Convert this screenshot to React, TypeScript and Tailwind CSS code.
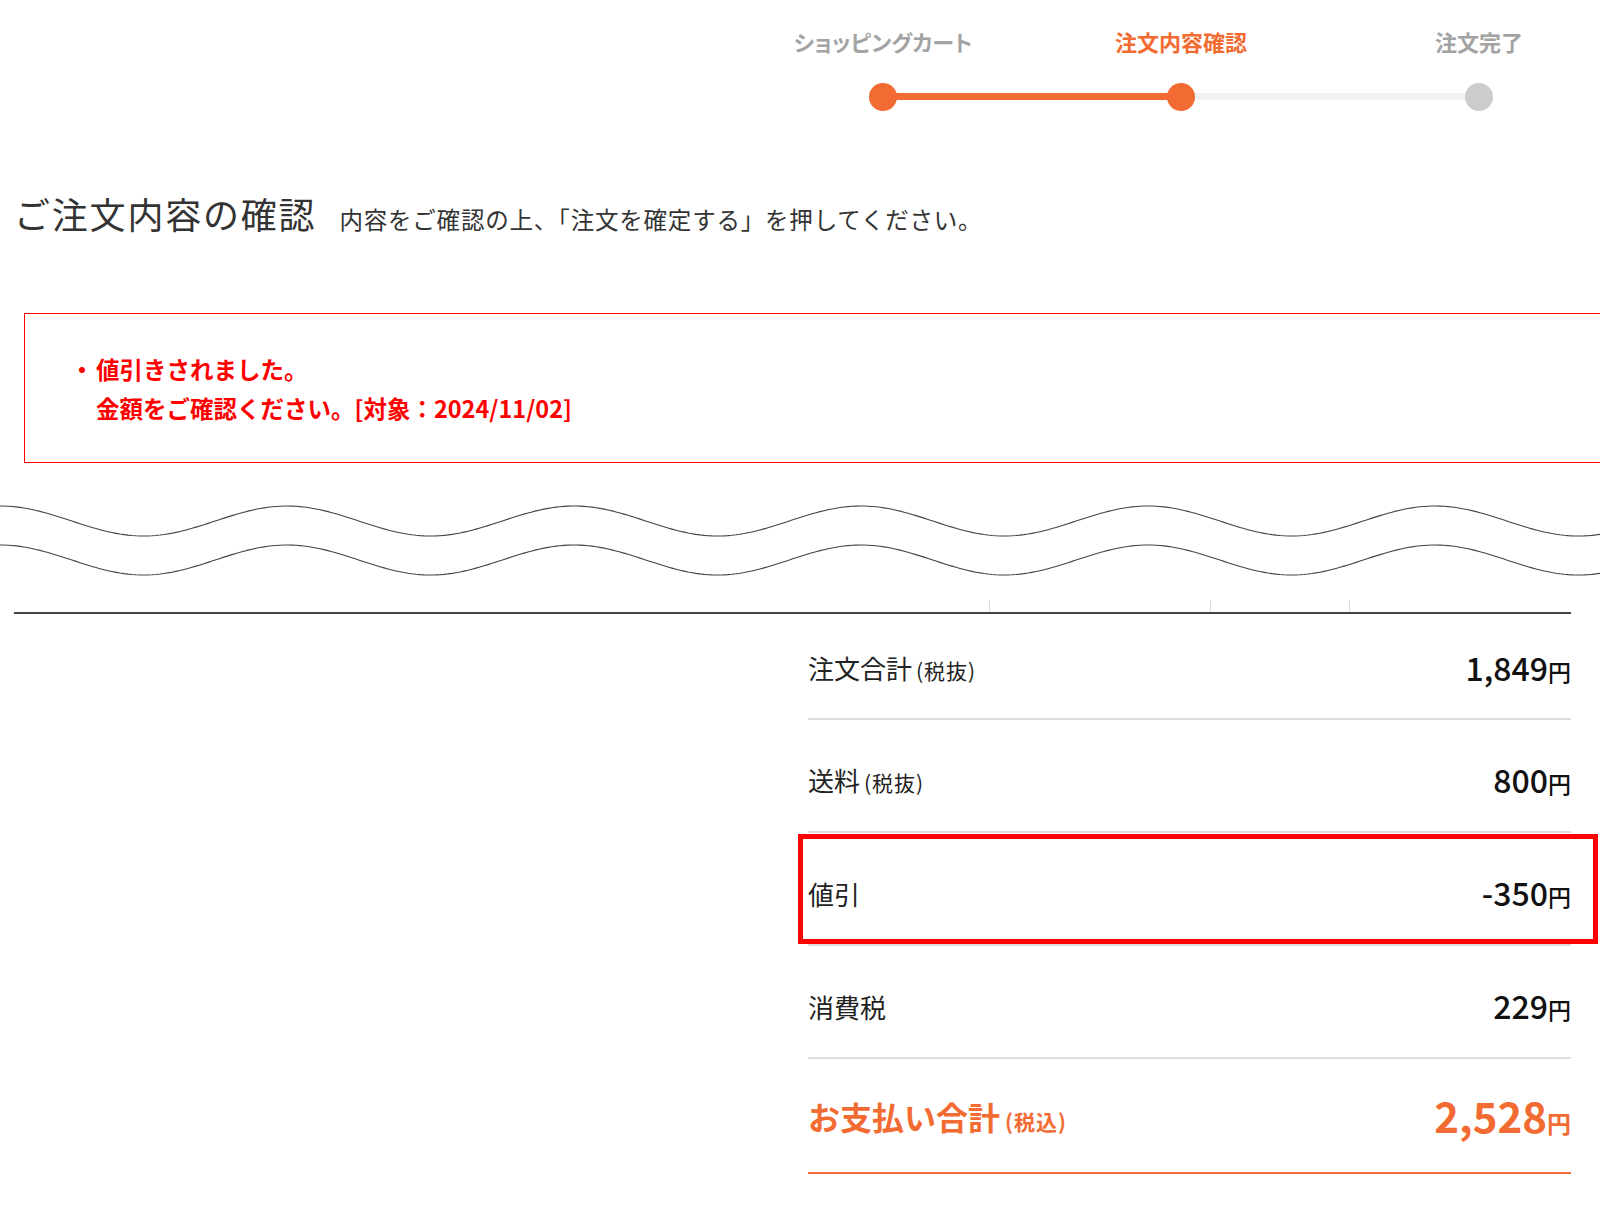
import React from "react";

const FONT = { fontFamily: '"Noto Sans CJK JP", "Noto Sans", sans-serif' };

const STEPS = [
  { label: "ショッピングカート", done: true },
  { label: "注文内容確認", done: true, current: true },
  { label: "注文完了", done: false },
];

// sine-ish wave line, period 287px
function wavePath(cy: number) {
  const pts: string[] = [];
  for (let x = 0; x <= 1600; x += 4) {
    const y = cy - 15 * Math.cos((2 * Math.PI * x) / 287);
    pts.push(`${x},${y.toFixed(2)}`);
  }
  return "M" + pts.join(" L");
}

function Stepper() {
  return (
    <div className="pt-[27px] ml-[734px] w-[894px]">
      <div className="grid grid-cols-3">
        {STEPS.map((s, i) => (
          <div
            key={s.label}
            className={`text-center text-[22px] leading-[28px] font-bold ${i === 0 ? "[font-feature-settings:'palt']" : ""} ${s.current ? "text-[#f26b32]" : "text-[#a3a3a3]"}`}
          >
            {s.label}
          </div>
        ))}
      </div>
      <div className="relative mt-[28px] h-[28px] grid grid-cols-3">
        <div className="absolute left-[149px] top-[10px] h-[7px] w-[596px] bg-[#f2f2f2]" />
        <div className="absolute left-[149px] top-[10px] h-[7px] w-[298px] bg-[#f26b32]" />
        {STEPS.map((s) => (
          <div key={s.label} className="flex justify-center">
            <div className={`relative w-[28px] h-[28px] rounded-full ${s.done ? "bg-[#f26b32]" : "bg-[#cccccc]"}`} />
          </div>
        ))}
      </div>
    </div>
  );
}

type Row = { label: string; note?: string; value: string };

const ROWS: Row[] = [
  { label: "注文合計", note: "(税抜)", value: "1,849" },
  { label: "送料", note: "(税抜)", value: "800" },
  { label: "値引", value: "-350" },
  { label: "消費税", value: "229" },
];

const ROW_CLASSES = [
  "h-[106px] pt-[6px]",
  "h-[113px] pt-[11px]",
  "h-[113px] pt-[11px]",
  "h-[113px] pt-[10px]",
];

export default function App() {
  return (
    <div className="relative w-[1600px] h-[1214px] overflow-hidden bg-white text-[#222]" style={FONT}>
      <Stepper />

      <div className="mt-[78px] pl-[14px] flex items-baseline gap-[23px]">
        <h1 className="text-[36px] leading-[48px] text-[#333] font-normal tracking-[1.8px]">ご注文内容の確認</h1>
        <p className="text-[23.5px] leading-[32px] text-[#333] tracking-[0.8px]">内容をご確認の上、「注文を確定する」を押してください。</p>
      </div>

      <div className="mt-[76px] ml-[24px] border-l border-y border-[#f00] pt-[36px] pb-[34px] pl-[43px]">
        <div className="flex text-[23.5px] leading-[39px] font-bold text-[#f00]">
          <span className="w-[28px] text-center">・</span>
          <div>
            <div>値引きされました。</div>
            <div>金額をご確認ください。[対象：2024/11/02]</div>
          </div>
        </div>
      </div>

      <svg className="block mt-[27px]" width="1600" height="100" viewBox="0 0 1600 100">
        <path d={wavePath(31)} fill="none" stroke="#444" strokeWidth="1.1" />
        <path d={wavePath(70)} fill="none" stroke="#444" strokeWidth="1.1" />
      </svg>

      <div className="ml-[14px] w-[1557px] h-[14px] mt-[10px] flex border-b-2 border-[#444]">
        <div className="w-[976px] border-r border-[#dddddd]" />
        <div className="w-[221px] border-r border-[#dddddd]" />
        <div className="w-[139px] border-r border-[#dddddd]" />
        <div className="flex-1" />
      </div>

      <div className="ml-[808px] w-[763px]">
        {ROWS.map((r, i) => (
          <div
            key={r.label}
            className={`relative flex items-center justify-between border-b-2 border-[#dddddd] ${ROW_CLASSES[i]}`}
          >
            <div className="flex items-baseline">
              <span className="text-[26px] leading-[36px]">{r.label}</span>
              {r.note && <span className="ml-[4px] text-[21px] leading-[36px] tracking-[1px]">{r.note}</span>}
            </div>
            <div className="flex items-baseline font-medium text-[#111]">
              <span className="text-[32px] leading-[38px]">{r.value}</span>
              <span className="text-[23px] leading-[38px]">円</span>
            </div>
            {r.label === "値引" && (
              <div className="absolute left-[-10px] right-[-27px] top-[1px] h-[110px] border-[5px] border-[#ff0000] pointer-events-none" />
            )}
          </div>
        ))}
        <div className="h-[115px] pt-[6px] flex items-center justify-between border-b-2 border-[#f26b32] text-[#f26b32] font-bold">
          <div className="flex items-baseline">
            <span className="text-[32px] leading-[44px]">お支払い合計</span>
            <span className="ml-[5px] text-[21px] leading-[44px] tracking-[1px]">(税込)</span>
          </div>
          <div className="flex items-baseline">
            <span className="text-[42px] leading-[50px]">2,528</span>
            <span className="text-[24px] leading-[50px]">円</span>
          </div>
        </div>
      </div>
    </div>
  );
}
